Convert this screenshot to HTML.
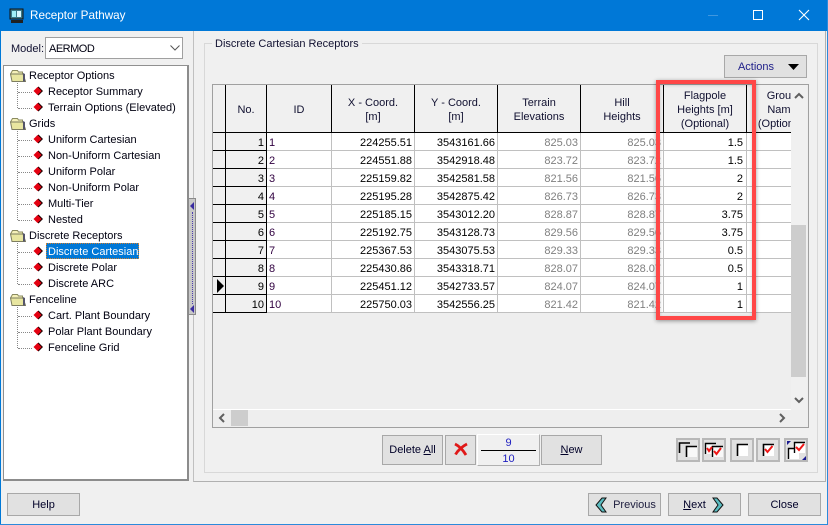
<!DOCTYPE html>
<html><head><meta charset="utf-8"><title>Receptor Pathway</title>
<style>
html,body{margin:0;padding:0;width:828px;height:525px;overflow:hidden;background:#f0f0f0}
body{position:relative;font:11px "Liberation Sans",sans-serif;color:#000}
.a{position:absolute;box-sizing:border-box}
.t{position:absolute;white-space:nowrap;line-height:16px;height:16px;color:#000010;margin-top:1px}
.btn{position:absolute;box-sizing:border-box;background:#e1e1e1;border:1px solid #a8a8a8;text-align:center;color:#000028;white-space:nowrap}
.ib{position:absolute;box-sizing:border-box;width:24px;height:24px;background:#e1e1e1;border:2px solid #b8b8b8}
u{text-underline-offset:1px}
table{position:absolute;left:213px;top:85px;border-collapse:separate;border-spacing:0;table-layout:fixed;width:578px}
td,th{box-sizing:border-box;padding:0;overflow:hidden;white-space:nowrap;font-weight:normal}
th{height:48px;background:#f0f0f0;border-right:1px solid #000;border-bottom:1px solid #000;padding-top:3px;line-height:14px;color:#101030;text-align:center}
td{height:18px;background:#fff;border-right:1px solid #c0c0c0;border-bottom:1px solid #c0c0c0;text-align:right;padding-right:2px;line-height:14px;vertical-align:top;padding-top:3px}
td.i{background:#f0f0f0;border-right:1px solid #000;border-bottom:1px solid #000;padding:0}
td.n{background:#f0f0f0;border-right:1px solid #000;border-bottom:1px solid #000;padding-right:2px}
td.d{text-align:left;padding-left:2px;color:#300040}
td.g{color:#808080}
td.f{padding-right:3px}
td.e{border-right:0}
th.e{border-right:0;position:relative}
th.e div{position:absolute;left:0;top:4px;width:70px;text-align:center}
svg{position:absolute;display:block}
</style></head><body>
<svg width="0" height="0" style="position:absolute"><defs>
<symbol id="fo" viewBox="0 0 16 13"><path d="M2.500 1.500h5l1 1.500h4v2h-12z" fill="#f4f0b8" stroke="#8a8a60"/><path d="M.5 5h12.500l2.500 7.500H2z" fill="#e8e6a0" stroke="#7d7d60"/><path d="M13 4v8.500h2V5z" fill="#55556a"/></symbol>
<symbol id="di" viewBox="0 0 10 10"><path d="M5.500 .5l4.500 4.500-4.500 4.500-4.500-4.500z" fill="#200000"/><path d="M4.500 1l4 4-4 4-4-4z" fill="#e40010"/></symbol>
</defs></svg>

<!-- title bar -->
<div class="a" style="left:0;top:0;width:828px;height:31px;background:#0078d7"></div>
<div class="a" style="left:0;top:0;width:1px;height:525px;background:#0078d7"></div>
<div class="a" style="left:827px;top:0;width:1px;height:525px;background:#2b8adb"></div>
<div class="a" style="left:0;top:524px;width:828px;height:1px;background:#2b8adb"></div>
<svg style="left:9px;top:8px" width="16" height="16" viewBox="0 0 16 16"><rect x="1" y="1" width="13" height="10" fill="#3a7a8a" stroke="#101010"/><rect x="3" y="3" width="4" height="6" fill="#a0f0f8"/><rect x="8" y="3" width="4" height="6" fill="#d8f8ff"/><path d="M2 12h12v3H2z" fill="#202020"/></svg>
<div class="t" style="left:30px;top:8px;margin:0;color:#fff;font-size:11.700px;line-height:16px">Receptor Pathway</div>
<div class="a" style="left:708px;top:15px;width:10px;height:1px;background:#3f97df"></div>
<div class="a" style="left:753px;top:10px;width:10px;height:10px;border:1px solid #fff"></div>
<svg style="left:798px;top:9px" width="12" height="12" viewBox="0 0 12 12"><path d="M1 1l10 10M11 1L1 11" stroke="#fff" stroke-width="1.100" fill="none"/></svg>

<!-- model combo -->
<div class="t" style="left:11px;top:40px;color:#101030">Model:</div>
<div class="a" style="left:45px;top:37px;width:138px;height:22px;background:#fff;border:1px solid #a0a0a0"></div>
<div class="t" style="left:49px;top:40px;letter-spacing:-.5px">AERMOD</div>
<svg style="left:170px;top:45px" width="10" height="6" viewBox="0 0 10 6"><path d="M.5.500L5 5 9.500.500" stroke="#555" fill="none"/></svg>

<!-- tree -->
<div class="a" style="left:3px;top:65px;width:186px;height:416px;background:#fff;border:1px solid #909090;border-right:2px solid #8c8c8c;border-bottom:2px solid #8c8c8c"></div>
<svg style="left:10px;top:69px" width="16" height="13"><use href="#fo"/></svg>
<svg style="left:10px;top:117px" width="16" height="13"><use href="#fo"/></svg>
<svg style="left:10px;top:229px" width="16" height="13"><use href="#fo"/></svg>
<svg style="left:10px;top:293px" width="16" height="13"><use href="#fo"/></svg>
<div class="a" style="left:17px;top:83px;height:25px;width:16px;border-left:1px dotted #888"></div>
<div class="a" style="left:17px;top:131px;height:89px;width:16px;border-left:1px dotted #888"></div>
<div class="a" style="left:17px;top:243px;height:41px;width:16px;border-left:1px dotted #888"></div>
<div class="a" style="left:17px;top:307px;height:41px;width:16px;border-left:1px dotted #888"></div>
<div class="a" style="left:18px;top:92px;width:14px;border-top:1px dotted #888"></div>
<div class="a" style="left:18px;top:108px;width:14px;border-top:1px dotted #888"></div>
<div class="a" style="left:18px;top:140px;width:14px;border-top:1px dotted #888"></div>
<div class="a" style="left:18px;top:156px;width:14px;border-top:1px dotted #888"></div>
<div class="a" style="left:18px;top:172px;width:14px;border-top:1px dotted #888"></div>
<div class="a" style="left:18px;top:188px;width:14px;border-top:1px dotted #888"></div>
<div class="a" style="left:18px;top:204px;width:14px;border-top:1px dotted #888"></div>
<div class="a" style="left:18px;top:220px;width:14px;border-top:1px dotted #888"></div>
<div class="a" style="left:18px;top:252px;width:14px;border-top:1px dotted #888"></div>
<div class="a" style="left:18px;top:268px;width:14px;border-top:1px dotted #888"></div>
<div class="a" style="left:18px;top:284px;width:14px;border-top:1px dotted #888"></div>
<div class="a" style="left:18px;top:316px;width:14px;border-top:1px dotted #888"></div>
<div class="a" style="left:18px;top:332px;width:14px;border-top:1px dotted #888"></div>
<div class="a" style="left:18px;top:348px;width:14px;border-top:1px dotted #888"></div>
<svg style="left:33px;top:86px" width="10" height="10"><use href="#di"/></svg>
<svg style="left:33px;top:102px" width="10" height="10"><use href="#di"/></svg>
<svg style="left:33px;top:134px" width="10" height="10"><use href="#di"/></svg>
<svg style="left:33px;top:150px" width="10" height="10"><use href="#di"/></svg>
<svg style="left:33px;top:166px" width="10" height="10"><use href="#di"/></svg>
<svg style="left:33px;top:182px" width="10" height="10"><use href="#di"/></svg>
<svg style="left:33px;top:198px" width="10" height="10"><use href="#di"/></svg>
<svg style="left:33px;top:214px" width="10" height="10"><use href="#di"/></svg>
<svg style="left:33px;top:246px" width="10" height="10"><use href="#di"/></svg>
<svg style="left:33px;top:262px" width="10" height="10"><use href="#di"/></svg>
<svg style="left:33px;top:278px" width="10" height="10"><use href="#di"/></svg>
<svg style="left:33px;top:310px" width="10" height="10"><use href="#di"/></svg>
<svg style="left:33px;top:326px" width="10" height="10"><use href="#di"/></svg>
<svg style="left:33px;top:342px" width="10" height="10"><use href="#di"/></svg>
<div class="t" style="left:29px;top:67px">Receptor Options</div>
<div class="t" style="left:48px;top:83px">Receptor Summary</div>
<div class="t" style="left:48px;top:99px">Terrain Options (Elevated)</div>
<div class="t" style="left:29px;top:115px">Grids</div>
<div class="t" style="left:48px;top:131px">Uniform Cartesian</div>
<div class="t" style="left:48px;top:147px">Non-Uniform Cartesian</div>
<div class="t" style="left:48px;top:163px">Uniform Polar</div>
<div class="t" style="left:48px;top:179px">Non-Uniform Polar</div>
<div class="t" style="left:48px;top:195px">Multi-Tier</div>
<div class="t" style="left:48px;top:211px">Nested</div>
<div class="t" style="left:29px;top:227px">Discrete Receptors</div>
<div class="a" style="left:46px;top:243px;width:93px;height:16px;background:#0078d7;outline:1px dotted #d08030;outline-offset:-1px"></div>
<div class="t" style="left:48px;top:243px;color:#fff">Discrete Cartesian</div>
<div class="t" style="left:48px;top:259px">Discrete Polar</div>
<div class="t" style="left:48px;top:275px">Discrete ARC</div>
<div class="t" style="left:29px;top:291px">Fenceline</div>
<div class="t" style="left:48px;top:307px">Cart. Plant Boundary</div>
<div class="t" style="left:48px;top:323px">Polar Plant Boundary</div>
<div class="t" style="left:48px;top:339px">Fenceline Grid</div>

<!-- panels -->
<div class="a" style="left:193px;top:31px;width:633px;height:451px;border-right:1px solid #b0b0b0;border-bottom:1px solid #b0b0b0;border-left:1px solid #c0c0c0"></div>
<div class="a" style="left:204px;top:43px;width:614px;height:430px;border:1px solid #d8d8d8"></div>
<div class="t" style="left:212px;top:35px;background:#f0f0f0;padding:0 3px;color:#101030">Discrete Cartesian Receptors</div>

<!-- splitter -->
<div class="a" style="left:188px;top:198px;width:8px;height:117px;background:#c8c8c8;border:1px solid #8a8a8a"></div>
<div class="a" style="left:192px;top:212px;width:0;height:92px;border-left:1px dotted #4a3cb0"></div>
<svg style="left:190px;top:202px" width="4" height="8"><path d="M4 0v8L0 4z" fill="#3a2ca0"/></svg>
<svg style="left:190px;top:305px" width="4" height="8"><path d="M4 0v8L0 4z" fill="#3a2ca0"/></svg>

<div class="btn" style="left:724px;top:55px;width:83px;height:23px;line-height:23px;padding-right:19px;color:#20208a">Actions</div>
<svg style="left:788px;top:64px" width="11" height="6"><path d="M0 0h11L5.500 6z" fill="#000"/></svg>

<!-- grid -->
<div class="a" style="left:212px;top:84px;width:597px;height:344px;background:#eee;border:1px solid #a0a0a0"></div>
<table>
<colgroup><col style="width:13px"><col style="width:41px"><col style="width:65px"><col style="width:83px"><col style="width:83px"><col style="width:83px"><col style="width:83px"><col style="width:83px"><col style="width:44px"></colgroup>
<tr><th></th><th>No.</th><th>ID</th><th>X - Coord.<br>[m]</th><th>Y - Coord.<br>[m]</th><th>Terrain<br>Elevations</th><th>Hill<br>Heights</th><th>Flagpole<br>Heights [m]<br>(Optional)</th><th class="e"><div>Group<br>Name<br>(Optional)</div></th></tr>
<tr><td class="i"></td><td class="n">1</td><td class="d">1</td><td>224255.51</td><td>3543161.66</td><td class="g">825.03</td><td class="g">825.03</td><td class="f">1.5</td><td class="e"></td></tr>
<tr><td class="i"></td><td class="n">2</td><td class="d">2</td><td>224551.88</td><td>3542918.48</td><td class="g">823.72</td><td class="g">823.72</td><td class="f">1.5</td><td class="e"></td></tr>
<tr><td class="i"></td><td class="n">3</td><td class="d">3</td><td>225159.82</td><td>3542581.58</td><td class="g">821.56</td><td class="g">821.56</td><td class="f">2</td><td class="e"></td></tr>
<tr><td class="i"></td><td class="n">4</td><td class="d">4</td><td>225195.28</td><td>3542875.42</td><td class="g">826.73</td><td class="g">826.73</td><td class="f">2</td><td class="e"></td></tr>
<tr><td class="i"></td><td class="n">5</td><td class="d">5</td><td>225185.15</td><td>3543012.20</td><td class="g">828.87</td><td class="g">828.87</td><td class="f">3.75</td><td class="e"></td></tr>
<tr><td class="i"></td><td class="n">6</td><td class="d">6</td><td>225192.75</td><td>3543128.73</td><td class="g">829.56</td><td class="g">829.56</td><td class="f">3.75</td><td class="e"></td></tr>
<tr><td class="i"></td><td class="n">7</td><td class="d">7</td><td>225367.53</td><td>3543075.53</td><td class="g">829.33</td><td class="g">829.33</td><td class="f">0.5</td><td class="e"></td></tr>
<tr><td class="i"></td><td class="n">8</td><td class="d">8</td><td>225430.86</td><td>3543318.71</td><td class="g">828.07</td><td class="g">828.07</td><td class="f">0.5</td><td class="e"></td></tr>
<tr><td class="i"></td><td class="n">9</td><td class="d">9</td><td>225451.12</td><td>3542733.57</td><td class="g">824.07</td><td class="g">824.07</td><td class="f">1</td><td class="e"></td></tr>
<tr><td class="i"></td><td class="n">10</td><td class="d">10</td><td>225750.03</td><td>3542556.25</td><td class="g">821.42</td><td class="g">821.42</td><td class="f">1</td><td class="e"></td></tr>
</table>
<svg style="left:217px;top:279px" width="8" height="14"><path d="M0 0l7 7-7 7z" fill="#000"/></svg>

<!-- scrollbars -->
<div class="a" style="left:791px;top:85px;width:16px;height:325px;background:#f0f0f0"></div>
<div class="a" style="left:791px;top:225px;width:15px;height:152px;background:#cdcdcd"></div>
<svg style="left:794px;top:92px" width="10" height="7"><path d="M1 6l4-4 4 4" stroke="#606060" stroke-width="2" fill="none"/></svg>
<svg style="left:794px;top:397px" width="10" height="7"><path d="M1 1l4 4 4-4" stroke="#606060" stroke-width="2" fill="none"/></svg>
<div class="a" style="left:213px;top:409px;width:578px;height:1px;background:#fff"></div>
<div class="a" style="left:231px;top:410px;width:17px;height:16px;background:#cdcdcd"></div>
<svg style="left:218px;top:413px" width="7" height="10"><path d="M6 1L2 5l4 4" stroke="#606060" stroke-width="2" fill="none"/></svg>
<svg style="left:779px;top:413px" width="7" height="10"><path d="M1 1l4 4-4 4" stroke="#606060" stroke-width="2" fill="none"/></svg>

<!-- red highlight -->
<div class="a" style="left:656px;top:80px;width:100px;height:240px;border:4px solid #ff4747;box-shadow:0 1px 4px rgba(0,0,0,.4),inset 0 1px 3px rgba(0,0,0,.2)"></div>

<!-- bottom grid buttons -->
<div class="btn" style="left:382px;top:435px;width:61px;height:30px;line-height:28px">Delete <u>A</u>ll</div>
<div class="btn" style="left:445px;top:435px;width:31px;height:30px"></div>
<svg style="left:453px;top:442px" width="16" height="14" viewBox="0 0 16 14"><path d="M2 2c4 2 8 6 11 11M14 2C10 4 5 8 2.500 12.500" fill="none" stroke="#e01818" stroke-width="2.800"/></svg>
<div class="a" style="left:477px;top:434px;width:63px;height:32px;background:#f0f0f0;border:1px solid #b0b0b0;border-top-color:#fff;border-left-color:#fff"></div>
<div class="a" style="left:481px;top:450px;width:55px;height:1px;background:#000"></div>
<div class="t" style="left:477px;top:434px;width:63px;text-align:center;color:#2020c0">9</div>
<div class="t" style="left:477px;top:450px;width:63px;text-align:center;color:#2020c0">10</div>
<div class="btn" style="left:541px;top:435px;width:61px;height:30px;line-height:28px"><u>N</u>ew</div>

<!-- icon buttons -->
<div class="ib" style="left:676px;top:438px"></div>
<div class="ib" style="left:702px;top:438px"></div>
<div class="ib" style="left:730px;top:438px"></div>
<div class="ib" style="left:756px;top:438px"></div>
<div class="ib" style="left:784px;top:438px"></div>
<svg style="left:676px;top:438px" width="24" height="24"><path d="M3.500 15V5H14" fill="none" stroke="#000" stroke-width="1.600"/><rect x="10" y="8" width="11" height="11" fill="#f8f8f8"/><path d="M10.500 19V8.500H21" fill="none" stroke="#000" stroke-width="1.600"/></svg>
<svg style="left:702px;top:438px" width="24" height="24"><rect x="3" y="5" width="11" height="11" fill="#f8f8f8"/><path d="M3.500 16V5.500H14" fill="none" stroke="#000" stroke-width="1.400"/><rect x="10" y="8" width="11" height="11" fill="#f8f8f8"/><path d="M10.500 19V8.500H21" fill="none" stroke="#000" stroke-width="1.400"/><path d="M5 10l2 3 3-4" fill="none" stroke="#f01818" stroke-width="2"/><path d="M12 13l2.500 3 4.500-6" fill="none" stroke="#f01818" stroke-width="2"/></svg>
<svg style="left:730px;top:438px" width="24" height="24"><rect x="7" y="6" width="11" height="12" fill="#fff"/><path d="M7.500 18V6.500H18" fill="none" stroke="#000" stroke-width="1.600"/></svg>
<svg style="left:756px;top:438px" width="24" height="24"><rect x="7" y="6" width="11" height="12" fill="#fff"/><path d="M7.500 18V6.500H18" fill="none" stroke="#000" stroke-width="1.600"/><path d="M9 11l2.500 3 5-6" fill="none" stroke="#f01818" stroke-width="2"/></svg>
<svg style="left:784px;top:438px" width="24" height="24"><rect x="4" y="10" width="11" height="11" fill="#fff"/><path d="M4.500 21V10.500H15" fill="none" stroke="#000" stroke-width="1.400"/><rect x="10" y="4" width="11" height="11" fill="#fff"/><path d="M10.500 15V4.500H21" fill="none" stroke="#000" stroke-width="1.400"/><path d="M12 9l3 3 5-6" fill="none" stroke="#f01818" stroke-width="2"/><path d="M3 3h4L3 7z" fill="#1a1a90"/><path d="M22 22h-4l4-4z" fill="#1a1a90"/></svg>

<!-- dialog buttons -->
<div class="btn" style="left:7px;top:493px;width:73px;height:23px;line-height:22px">Help</div>
<div class="btn" style="left:588px;top:493px;width:73px;height:23px;line-height:22px;padding-left:20px"><span style="color:#202040">Previous</span></div>
<svg style="left:595px;top:497px" width="12" height="16" viewBox="0 0 12 16"><path d="M11 1H7L1 8l6 7h4L6 8z" fill="#5cbcc0" stroke="#111"/></svg>
<div class="btn" style="left:668px;top:493px;width:73px;height:23px;line-height:22px;padding-right:20px"><u>N</u>ext</div>
<svg style="left:712px;top:497px" width="12" height="16" viewBox="0 0 12 16"><path d="M1 1h4l6 7-6 7H1l5-7z" fill="#5cbcc0" stroke="#111"/></svg>
<div class="btn" style="left:748px;top:493px;width:73px;height:23px;line-height:22px">Close</div>
</body></html>
